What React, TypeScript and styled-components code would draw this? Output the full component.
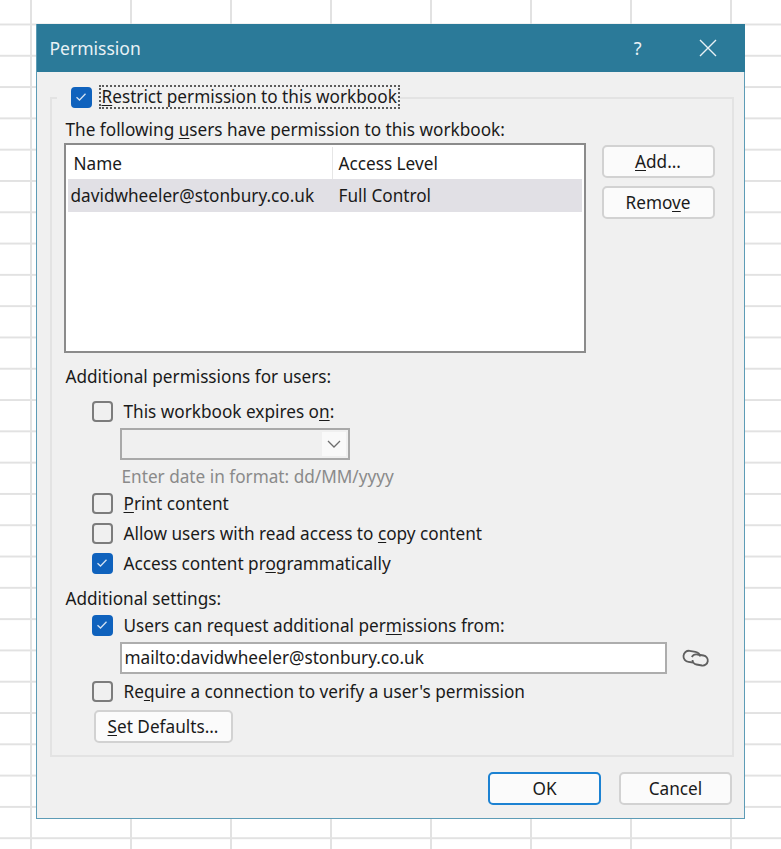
import { createGlobalStyle, styled } from 'styled-components';

const GlobalStyle = createGlobalStyle`
    html, body {
        margin: 0;
        padding: 0;
        height: 849px;
        overflow: hidden;
    }
    body {
        background-color: #ffffff;
        background-image:
            linear-gradient(to right, #e2e2e2 2px, transparent 2px),
            linear-gradient(to bottom, #e2e2e2 2px, transparent 2px);
        background-size: 100px 31.3px;
        background-position: 30px 23.5px;
        font-family: "Noto Sans", "Open Sans", sans-serif;
        font-size: 17.2px;
        color: #1a1a1a;
    }
`;

const Check = ({ on }: { on?: boolean }) => (
    <CheckBox $on={on}>
        {on && (
            <svg width="12" height="10" viewBox="0 0 12 10" fill="none">
                <path d="M1.5 5.2 L4.5 8 L10.5 1.8" stroke="#d3e2f3" strokeWidth="1.3" />
            </svg>
        )}
    </CheckBox>
);

export default function App() {
    return (
        <Page>
            <GlobalStyle />
            <Dialog>
                <TitleBar>
                    <Title>Permission</Title>
                    <Help>?</Help>
                    <svg width="18" height="18" viewBox="0 0 18 18" fill="none">
                        <path d="M1 1 L17 17 M17 1 L1 17" stroke="#e8f1f5" strokeWidth="1.4" />
                    </svg>
                </TitleBar>
                <Frame>
                    <Legend>
                        <Check on />
                        <FocusLabel>
                            <Key>R</Key>estrict permission to this workbook
                        </FocusLabel>
                    </Legend>
                    <Caption $top={8}>
                        The following <Key>u</Key>sers have permission to this workbook:
                    </Caption>
                    <ListArea>
                        <List>
                            <ListHeader>
                                <NameCell>Name</NameCell>
                                <LevelCell>Access Level</LevelCell>
                            </ListHeader>
                            <ListRow>
                                <NameValue>davidwheeler@stonbury.co.uk</NameValue>
                                <LevelCell>Full Control</LevelCell>
                            </ListRow>
                        </List>
                        <SideButtons>
                            <Button>
                                <Key>A</Key>dd...
                            </Button>
                            <Button>
                                Remo<Key>v</Key>e
                            </Button>
                        </SideButtons>
                    </ListArea>
                    <Caption $top={13}>Additional permissions for users:</Caption>
                    <Option $top={12}>
                        <Check />
                        <span>
                            This workbook expires o<Key>n</Key>:
                        </span>
                    </Option>
                    <DateSelect>
                        <DropButton>
                            <svg width="14" height="8" viewBox="0 0 14 8" fill="none">
                                <path d="M1 1 L7 7 L13 1" stroke="#6d6d6d" strokeWidth="1.3" />
                            </svg>
                        </DropButton>
                    </DateSelect>
                    <Hint>Enter date in format: dd/MM/yyyy</Hint>
                    <Option $top={4}>
                        <Check />
                        <span>
                            <Key>P</Key>rint content
                        </span>
                    </Option>
                    <Option $top={8}>
                        <Check />
                        <span>
                            Allow users with read access to <Key>c</Key>opy content
                        </span>
                    </Option>
                    <Option $top={8}>
                        <Check on />
                        <span>
                            Access content pr<Key>o</Key>grammatically
                        </span>
                    </Option>
                    <Caption $top={14}>Additional settings:</Caption>
                    <Option $top={4}>
                        <Check on />
                        <span>
                            Users can request additional per<Key>m</Key>issions from:
                        </span>
                    </Option>
                    <MailRow>
                        <MailInput>mailto:davidwheeler@stonbury.co.uk</MailInput>
                        <svg width="28" height="18" viewBox="0 0 28 18" fill="none" stroke="#5f5f5f" strokeWidth="1.8">
                            <path d="M11 13.5 L6.5 12.8 A5.4 5.4 0 0 1 7.5 1.8 L13.5 2.8 A5.4 5.4 0 0 1 18 7.5" />
                            <path d="M9.8 8 A5.2 5.2 0 0 1 15.5 5.5 L21.5 6.5 A5 5 0 0 1 20 16.5 L14.5 15.5 A5 5 0 0 1 10.5 11" />
                        </svg>
                    </MailRow>
                    <Option $top={6}>
                        <Check />
                        <span>
                            Re<Key>q</Key>uire a connection to verify a user's permission
                        </span>
                    </Option>
                    <DefaultsButton>
                        <Key>S</Key>et Defaults...
                    </DefaultsButton>
                </Frame>
                <Footer>
                    <Button $primary>OK</Button>
                    <Button>Cancel</Button>
                </Footer>
            </Dialog>
        </Page>
    );
}

const Page = styled.div`
    padding: 24px 0 0 36px;
`;

const Dialog = styled.div`
    width: 709px;
    height: 795px;
    box-sizing: border-box;
    background: #f0f0f0;
    border: 1.5px solid #5d9cb6;
    border-top: none;
`;

const TitleBar = styled.div`
    height: 48px;
    box-sizing: border-box;
    background: #2b7a99;
    display: flex;
    align-items: center;
    padding: 0 28px 0 13px;
    margin: 0 -0.5px;
    color: #e8f1f5;
`;

const Title = styled.div`
    flex: 1;
    font-size: 17.5px;
`;

const Help = styled.div`
    font-size: 18px;
    margin-right: 57px;
`;

const Frame = styled.fieldset`
    margin: 13px 10px 0 12.5px;
    padding: 0 13px 11px 13px;
    border: 2px solid #e3e3e3;
    min-width: 0;
    height: 672px;
    box-sizing: border-box;
`;

const Legend = styled.legend`
    display: flex;
    align-items: center;
    gap: 7px;
    margin-left: -8px;
    padding: 0 0 2px 14px;
    height: 26px;
    box-sizing: border-box;
`;

const CheckBox = styled.span<{ $on?: boolean }>`
    width: 21px;
    height: 21px;
    flex: none;
    box-sizing: border-box;
    border-radius: 4px;
    display: flex;
    align-items: center;
    justify-content: center;
    border: 2px solid ${(p) => (p.$on ? '#0f62bd' : '#7c7c7c')};
    background: ${(p) => (p.$on ? '#0f62bd' : 'transparent')};
`;

const FocusLabel = styled.span`
    height: 24px;
    line-height: 20px;
    padding: 0 1px;
    box-sizing: border-box;
    border: 2px dotted #5a5a5a;
    white-space: nowrap;
`;

const Key = styled.span`
    text-decoration: underline;
    text-underline-offset: 2px;
`;

const Caption = styled.div<{ $top: number }>`
    height: 22px;
    line-height: 22px;
    margin-top: ${(p) => p.$top}px;
    margin-left: 1px;
    white-space: nowrap;
`;

const ListArea = styled.div`
    display: flex;
    gap: 16px;
    margin: 2px 0 0 -1px;
`;

const List = styled.div`
    width: 522px;
    height: 210px;
    box-sizing: border-box;
    background: #ffffff;
    border: 2px solid #8b8b8b;
    padding: 2px 2px;
`;

const ListHeader = styled.div`
    display: flex;
    height: 32px;
    align-items: center;
`;

const NameCell = styled.div`
    width: 265px;
    box-sizing: border-box;
    padding-left: 6px;
    border-right: 1px solid #e6e6e6;
    display: flex;
    align-items: center;
    height: 32px;
`;

const LevelCell = styled.div`
    padding-left: 6px;
`;

const ListRow = styled.div`
    display: flex;
    height: 33px;
    align-items: center;
    background: #e1e0e5;
`;

const NameValue = styled.div`
    width: 265px;
    box-sizing: border-box;
    padding-left: 3px;
`;

const SideButtons = styled.div`
    display: flex;
    flex-direction: column;
    gap: 8px;
    padding-top: 2px;
`;

const Button = styled.button<{ $primary?: boolean }>`
    width: 113px;
    height: 33px;
    padding: 0;
    box-sizing: border-box;
    border-radius: 5px;
    background: #fbfbfb;
    border: 2px solid ${(p) => (p.$primary ? '#1c82d2' : '#d2d2d2')};
    font: inherit;
    color: inherit;
`;

const Option = styled.div<{ $top: number }>`
    display: flex;
    align-items: center;
    gap: 11px;
    height: 22px;
    margin: ${(p) => p.$top}px 0 0 27px;
    white-space: nowrap;
`;

const DateSelect = styled.div`
    width: 230px;
    height: 32px;
    margin: 6px 0 0 55px;
    box-sizing: border-box;
    border: 2px solid #a9a9a9;
    display: flex;
    justify-content: flex-end;
    padding: 2px;
`;

const DropButton = styled.div`
    width: 24px;
    background: #f9f9f9;
    display: flex;
    align-items: center;
    justify-content: center;
`;

const Hint = styled.div`
    height: 22px;
    line-height: 22px;
    margin: 6px 0 0 57px;
    color: #8a8a8a;
`;

const MailRow = styled.div`
    display: flex;
    align-items: center;
    gap: 15px;
    margin: 6px 0 0 55px;
`;

const MailInput = styled.div`
    width: 547px;
    height: 32px;
    line-height: 28px;
    box-sizing: border-box;
    border: 2px solid #adadad;
    background: #ffffff;
    padding-left: 3px;
`;

const DefaultsButton = styled(Button)`
    display: block;
    width: 139px;
    margin: 8px 0 0 29px;
`;

const Footer = styled.div`
    display: flex;
    justify-content: flex-end;
    gap: 18px;
    margin: 15px 12px 0 0;
`;
